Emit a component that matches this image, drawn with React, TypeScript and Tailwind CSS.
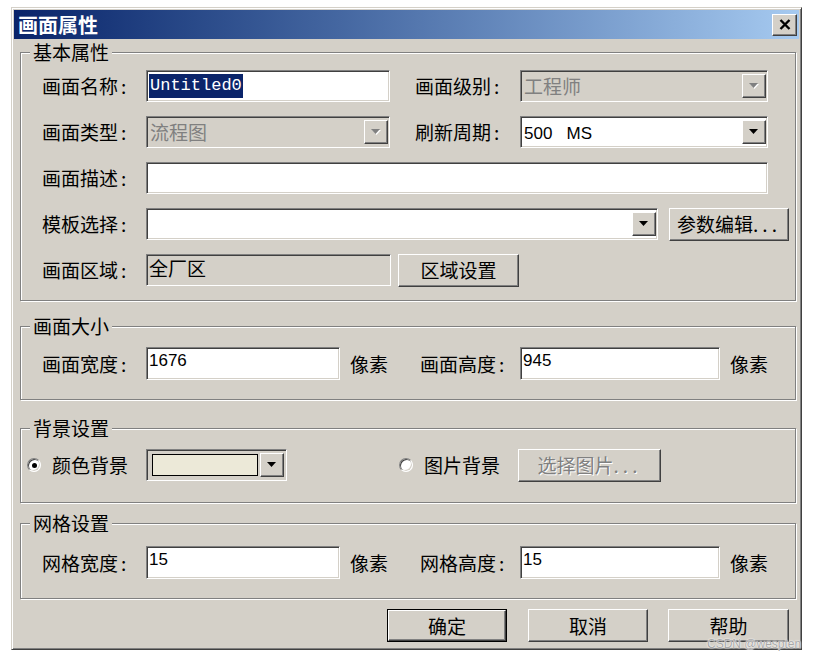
import React from "react";

const sunken =
  "border border-t-[#808080] border-l-[#808080] border-b-white border-r-white shadow-[inset_1px_1px_0_#404040,inset_-1px_-1px_0_#d4d0c8]";
const raised =
  "border border-t-white border-l-white border-b-[#404040] border-r-[#404040] shadow-[inset_-1px_-1px_0_#808080,inset_1px_1px_0_#d4d0c8]";

function Arrow({ disabled }: { disabled?: boolean }) {
  return (
    <svg width="10" height="6" viewBox="0 0 10 6">
      {disabled && <path d="M1 1H10L5.5 6Z" fill="#ffffff" />}
      <path d="M0 0H9L4.5 5Z" fill={disabled ? "#808080" : "#000000"} />
    </svg>
  );
}

function DropBtn({ disabled }: { disabled?: boolean }) {
  return (
    <div className={`flex h-[24px] w-[24px] shrink-0 items-center justify-center bg-[#d4d0c8] ${raised}`}>
      <Arrow disabled={disabled} />
    </div>
  );
}

function Combo({
  className,
  children,
  disabled,
}: {
  className: string;
  children?: React.ReactNode;
  disabled?: boolean;
}) {
  return (
    <div
      className={`flex h-[32px] shrink-0 items-center pl-[3px] pr-[1px] ${sunken} ${
        disabled ? "bg-[#d4d0c8]" : "bg-white"
      } ${className}`}
    >
      <div className="min-w-0 flex-1">{children}</div>
      <DropBtn disabled={disabled} />
    </div>
  );
}

function Input({
  className,
  children,
  gray,
}: {
  className: string;
  children?: React.ReactNode;
  gray?: boolean;
}) {
  return (
    <div
      className={`flex h-[32px] shrink-0 items-center pl-[2px] ${sunken} ${
        gray ? "bg-[#d4d0c8]" : "bg-white"
      } ${className}`}
    >
      {children}
    </div>
  );
}

function Label({ text, className }: { text: string; className: string }) {
  return (
    <div className={`shrink-0 whitespace-nowrap ${className}`}>
      {text}
      <span className="ml-[3px]">:</span>
    </div>
  );
}

function Btn({
  className,
  children,
  disabled,
}: {
  className: string;
  children: React.ReactNode;
  disabled?: boolean;
}) {
  return (
    <div
      className={`flex shrink-0 items-center justify-center bg-[#d4d0c8] ${raised} ${
        disabled ? "text-[#808080] [text-shadow:1px_1px_0_#ffffff]" : ""
      } ${className}`}
    >
      {children}
    </div>
  );
}

function Group({
  title,
  className,
  children,
}: {
  title: string;
  className: string;
  children: React.ReactNode;
}) {
  return (
    <div
      className={`relative ml-[6px] w-[776px] shrink-0 border border-[#808080] shadow-[inset_1px_1px_0_#ffffff,1px_1px_0_#ffffff] ${className}`}
    >
      <span className="absolute left-[9px] top-[-12px] bg-[#d4d0c8] px-[3px] leading-[22px]">{title}</span>
      {children}
    </div>
  );
}

function Radio({ checked }: { checked?: boolean }) {
  return (
    <div className="flex h-[14px] w-[14px] shrink-0 items-center justify-center rounded-full border border-t-[#808080] border-l-[#808080] border-b-white border-r-white bg-white shadow-[inset_1px_1px_0_#404040,inset_-1px_-1px_0_#d4d0c8]">
      {checked && <div className="h-[5px] w-[5px] rounded-full bg-black" />}
    </div>
  );
}

const sansNum = "font-['Liberation_Sans',sans-serif] text-[17px] leading-[20px]";

export default function App() {
  return (
    <div className="relative h-[660px] w-[821px] overflow-hidden bg-white font-['Noto_Sans_CJK_SC','Noto_Sans',sans-serif] text-[19px] leading-[22px] text-black">
      <div className="pl-[11px] pt-[7px]">
        <div className="flex h-[643px] w-[791px] flex-col border border-t-[#d4d0c8] border-l-[#d4d0c8] border-b-[#404040] border-r-[#404040] bg-[#d4d0c8] p-[2px] shadow-[inset_1px_1px_0_#ffffff,inset_-1px_-1px_0_#808080]">
          {/* title bar */}
          <div className="flex h-[29px] shrink-0 items-center bg-linear-to-r from-[#0a246a] to-[#a6caf0] pl-[4px] pr-[2px]">
            <span className="text-[20px] font-bold leading-[24px] text-white">画面属性</span>
            <div className={`ml-auto flex h-[22px] w-[25px] items-center justify-center bg-[#d4d0c8] ${raised}`}>
              <svg width="12" height="11" viewBox="0 0 12 11">
                <path d="M1.5 1L10.5 10M10.5 1L1.5 10" stroke="#000" strokeWidth="2.4" />
              </svg>
            </div>
          </div>

          {/* 基本属性 */}
          <Group title="基本属性" className="mt-[13px] h-[249px]">
            <div className="flex flex-col gap-[14px] pl-[21px] pt-[17px]">
              <div className="flex h-[32px] items-center">
                <Label text="画面名称" className="w-[104px]" />
                <Input className="w-[244px]">
                  <span className="bg-[#0a246a] px-[1px] font-['Liberation_Mono',monospace] text-[17px] leading-[24px] text-white">
                    Untitled0
                  </span>
                </Input>
                <Label text="画面级别" className="ml-[25px] w-[105px]" />
                <Combo className="w-[248px]" disabled>
                  <span className="text-[#808080]">工程师</span>
                </Combo>
              </div>
              <div className="flex h-[32px] items-center">
                <Label text="画面类型" className="w-[104px]" />
                <Combo className="w-[244px]" disabled>
                  <span className="text-[#808080]">流程图</span>
                </Combo>
                <Label text="刷新周期" className="ml-[25px] w-[105px]" />
                <Combo className="w-[248px]">
                  <span className={`whitespace-pre ${sansNum}`}>500   MS</span>
                </Combo>
              </div>
              <div className="flex h-[32px] items-center">
                <Label text="画面描述" className="w-[104px]" />
                <Input className="w-[622px]" />
              </div>
              <div className="flex h-[32px] items-center">
                <Label text="模板选择" className="w-[104px]" />
                <Combo className="w-[512px]" />
                <Btn className="ml-[11px] h-[33px] w-[120px]">
                  参数编辑<span className="tracking-[4px]">...</span>
                </Btn>
              </div>
              <div className="flex h-[32px] items-center">
                <Label text="画面区域" className="w-[104px]" />
                <Input className="w-[245px] items-start pt-[2px]" gray>
                  全厂区
                </Input>
                <Btn className="ml-[7px] h-[33px] w-[121px]">区域设置</Btn>
              </div>
            </div>
          </Group>

          {/* 画面大小 */}
          <Group title="画面大小" className="mt-[25px] h-[74px]">
            <div className="mt-[20px] flex h-[33px] items-center pl-[21px]">
              <Label text="画面宽度" className="w-[104px]" />
              <Input className="h-[33px] w-[194px] items-start pt-[3px]">
                <span className={sansNum}>1676</span>
              </Input>
              <span className="ml-[10px] w-[70px]">像素</span>
              <Label text="画面高度" className="w-[100px]" />
              <Input className="h-[33px] w-[200px] items-start pt-[3px]">
                <span className={sansNum}>945</span>
              </Input>
              <span className="ml-[10px]">像素</span>
            </div>
          </Group>

          {/* 背景设置 */}
          <Group title="背景设置" className="mt-[28px] h-[75px]">
            <div className="mt-[20px] flex h-[32px] items-center pl-[6px]">
              <Radio checked />
              <span className="ml-[11px] w-[94px]">颜色背景</span>
              <div className={`flex h-[32px] w-[141px] items-center bg-[#d4d0c8] pl-[5px] pr-[2px] ${sunken}`}>
                <div className="h-[22px] w-[106px] border border-black bg-[#ece9d8]" />
                <div className="ml-[2px]">
                  <DropBtn />
                </div>
              </div>
              <div className="ml-[112px]">
                <Radio />
              </div>
              <span className="ml-[11px] w-[94px]">图片背景</span>
              <Btn className="h-[33px] w-[143px]" disabled>
                选择图片<span className="tracking-[4px]">...</span>
              </Btn>
            </div>
          </Group>

          {/* 网格设置 */}
          <Group title="网格设置" className="mt-[20px] h-[76px]">
            <div className="mt-[22px] flex h-[33px] items-center pl-[21px]">
              <Label text="网格宽度" className="w-[104px]" />
              <Input className="h-[33px] w-[194px] items-start pt-[3px]">
                <span className={sansNum}>15</span>
              </Input>
              <span className="ml-[10px] w-[70px]">像素</span>
              <Label text="网格高度" className="w-[100px]" />
              <Input className="h-[33px] w-[200px] items-start pt-[3px]">
                <span className={sansNum}>15</span>
              </Input>
              <span className="ml-[10px]">像素</span>
            </div>
          </Group>

          {/* buttons */}
          <div className="ml-[373px] mt-[10px] flex h-[33px] items-center">
            <div className="h-[33px] w-[120px] border border-black">
              <Btn className="h-full w-full">确定</Btn>
            </div>
            <Btn className="ml-[21px] h-[33px] w-[120px]">取消</Btn>
            <Btn className="ml-[20px] h-[33px] w-[121px]">帮助</Btn>
          </div>
        </div>
      </div>
      <span className="absolute left-[707px] top-[637px] font-['Liberation_Sans',sans-serif] text-[12px] leading-[14px] text-[#a8a8a8] [text-shadow:0_0_1px_#ffffff,0_0_2px_#ffffff]">
        CSDN @wespten
      </span>
    </div>
  );
}
